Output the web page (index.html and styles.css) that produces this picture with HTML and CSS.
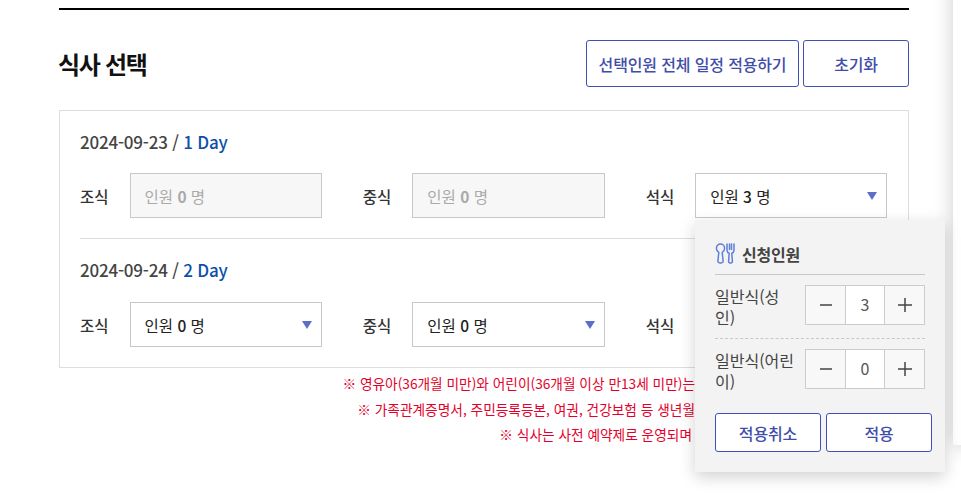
FILE: index.html
```html
<!DOCTYPE html>
<html lang="ko">
<head>
<meta charset="utf-8">
<title>식사 선택</title>
<link rel="stylesheet" href="styles.css">
</head>
<body>
<div class="page">
  <main class="main">
    <header class="head">
      <h2 class="title">식사 선택</h2>
      <div class="actions">
        <button class="btn btn-wide">선택인원 전체 일정 적용하기</button>
        <button class="btn btn-reset">초기화</button>
      </div>
    </header>
    <section class="box">
      <div class="day">
        <p class="date">2024-09-23 / <span class="daynum">1 Day</span></p>
        <div class="meals">
          <div class="meal"><span class="meal-name">조식</span><div class="sel sel-off">인원 <b>0</b> 명</div></div>
          <div class="meal"><span class="meal-name">중식</span><div class="sel sel-off">인원 <b>0</b> 명</div></div>
          <div class="meal"><span class="meal-name">석식</span><div class="sel">인원 <b>3</b> 명</div></div>
        </div>
      </div>
      <div class="day day-second">
        <p class="date">2024-09-24 / <span class="daynum">2 Day</span></p>
        <div class="meals">
          <div class="meal"><span class="meal-name">조식</span><div class="sel">인원 <b>0</b> 명</div></div>
          <div class="meal"><span class="meal-name">중식</span><div class="sel">인원 <b>0</b> 명</div></div>
          <div class="meal"><span class="meal-name">석식</span><div class="sel"></div></div>
        </div>
      </div>
    </section>
    <div class="notes">
      <p>※ 영유아(36개월 미만)와 어린이(36개월 이상 만13세 미만)는</p>
      <p>※ 가족관계증명서, 주민등록등본, 여권, 건강보험 등 생년월</p>
      <p class="note-last">※ 식사는 사전 예약제로 운영되며</p>
    </div>
  </main>

  <aside class="sidepanel"></aside>

  <div class="popup">
    <div class="pop-head">
      <svg class="pop-icon" width="21" height="21" viewBox="0 0 21 21" fill="none" stroke="#5f7fd8" stroke-width="1.5" stroke-linejoin="round" stroke-linecap="round">
        <path d="M5.500 1C3.200 1 1.400 2.900 1.400 5.200c0 1.900 1.100 3.300 2.400 4.200L2.900 18c-.1 1 .8 1.900 1.900 1.900h1.400c1.100 0 2-.9 1.900-1.900L7.200 9.400c1.300-.9 2.400-2.300 2.400-4.200C9.600 2.900 7.800 1 5.500 1z"/>
        <path d="M12 1v6.300c0 1.600 1 2.500 2.200 2.900L13.600 18.200c-.1 1 .6 1.800 1.600 1.800h.6c1 0 1.700-.8 1.600-1.800L16.800 10.200C18 9.800 19 8.900 19 7.300V1"/>
        <path d="M14.500 1v5.500M16.500 1v5.500"/>
      </svg>
      <strong class="pop-title">신청인원</strong>
    </div>
    <div class="pop-row">
      <span class="pop-label">일반식(성인)</span>
      <div class="stepper">
        <button class="step" aria-label="감소"><svg width="12" height="14" viewBox="0 0 12 14"><path d="M0 7h12" stroke="#444" stroke-width="1.500"/></svg></button>
        <span class="count">3</span>
        <button class="step" aria-label="증가"><svg width="14" height="14" viewBox="0 0 14 14"><path d="M0 7h14M7 0v14" stroke="#444" stroke-width="1.500"/></svg></button>
      </div>
    </div>
    <div class="pop-row pop-row-dashed">
      <span class="pop-label">일반식(어린이)</span>
      <div class="stepper">
        <button class="step" aria-label="감소"><svg width="12" height="14" viewBox="0 0 12 14"><path d="M0 7h12" stroke="#444" stroke-width="1.500"/></svg></button>
        <span class="count">0</span>
        <button class="step" aria-label="증가"><svg width="14" height="14" viewBox="0 0 14 14"><path d="M0 7h14M7 0v14" stroke="#444" stroke-width="1.500"/></svg></button>
      </div>
    </div>
    <div class="pop-actions">
      <button class="btn btn-pop">적용취소</button>
      <button class="btn btn-pop">적용</button>
    </div>
  </div>
</div>
</body>
</html>
```
FILE: styles.css
```css
* { box-sizing: border-box; }
html, body { margin: 0; height: 504px; overflow: hidden; background: #fff; }
body { font-family: "Noto Sans CJK KR", "Noto Sans", sans-serif; color: #333; }
p, h2 { margin: 0; }
button { font-family: inherit; cursor: pointer; }

.page { position: relative; width: 961px; height: 504px; overflow: hidden; }

.main { width: 850px; margin-left: 59px; padding-top: 8px; }
.head {
  border-top: 2px solid #000;
  padding-top: 30px;
  display: flex;
  justify-content: space-between;
  align-items: center;
}
.title { font-size: 24px; line-height: 47px; font-weight: 700; color: #111; letter-spacing: -1.3px; margin-left: -1px; }
.actions { display: flex; gap: 4px; }
.btn {
  height: 47px;
  background: #fff;
  border: 1px solid #3f51b5;
  border-radius: 3px;
  color: #3f4ea8;
  font-size: 16px;
  font-weight: 500;
  letter-spacing: -0.15px;
  padding: 0;
}
.btn-wide { width: 213px; }
.btn-reset { width: 106px; }

.box { margin-top: 23px; height: 258px; border: 1px solid #ddd; padding: 0 20px; }
.day { padding: 18px 0 20px; }
.day-second { border-top: 1px solid #ddd; padding-top: 18px; }
.date { font-size: 17px; line-height: 26px; font-weight: 500; color: #444; letter-spacing: -0.2px; }
.daynum { color: #0b50ad; }
.meals { margin-top: 18px; display: grid; grid-template-columns: repeat(3, 1fr); column-gap: 41px; width: 807.500px; }
.day-second .meals { margin-top: 19px; }
.meal { display: flex; align-items: center; }
.meal-name { flex: 0 0 49.500px; font-size: 15.500px; font-weight: 500; color: #333; }
.sel {
  position: relative;
  flex: 1;
  height: 45px;
  line-height: 45px;
  border: 1px solid #c8c8c8;
  padding-left: 14px;
  font-size: 15.500px;
  color: #222;
  background: #fff;
}
.sel b { font-weight: 500; }
.sel::after {
  content: "";
  position: absolute;
  right: 9px;
  top: 18px;
  border-style: solid;
  border-width: 8px 5px 0;
  border-color: #5b6fc9 transparent transparent;
}
.sel-off { background: #f7f7f7; color: #aaa; }
.sel-off b { font-weight: 700; }
.sel-off::after { display: none; }

.notes {
  margin-top: 3px;
  padding-right: 214px;
  display: flex;
  flex-direction: column;
  align-items: flex-end;
  font-size: 13.700px;
  line-height: 25.600px;
  color: #e4002b;
  white-space: nowrap;
}
.note-last { padding-right: 3px; }

.sidepanel {
  position: absolute;
  left: 953px;
  top: -30px;
  width: 40px;
  height: 475px;
  background: #fff;
  box-shadow: 0 0 20px rgba(0, 0, 0, .2);
}

.popup {
  position: absolute;
  left: 695px;
  top: 220px;
  width: 250px;
  height: 252px;
  background: #f3f3f3;
  padding: 23px 20px 0;
  box-shadow: 0 5px 15px rgba(0, 0, 0, .18);
}
.pop-head {
  display: flex;
  align-items: center;
  gap: 6px;
  height: 32px;
  padding-bottom: 10px;
  border-bottom: 1px solid #c8c8c8;
}
.pop-icon { flex: none; }
.pop-title { font-size: 16px; font-weight: 700; color: #444; letter-spacing: -0.2px; }
.pop-row {
  display: flex;
  justify-content: space-between;
  align-items: flex-start;
  padding: 10px 0 13px;
}
.pop-row-dashed { border-top: 1px dashed #c8c8c8; }
.pop-label { width: 84px; height: 40px; font-size: 16px; line-height: 21px; color: #444; padding-top: 1px; }
.stepper { display: flex; width: 120px; height: 40px; border: 1px solid #ccc; background: #fff; }
.step {
  flex: 0 0 39px;
  border: 0;
  padding: 0;
  background: #f8f8f8;
  display: flex;
  align-items: center;
  justify-content: center;
}
.count {
  flex: 1;
  text-align: center;
  line-height: 37px;
  font-size: 16px;
  color: #555;
  border-left: 1px solid #ccc;
  border-right: 1px solid #ccc;
  background: #fff;
}
.pop-actions { display: flex; gap: 5px; width: 217px; margin-top: 11px; }
.btn-pop { flex: 1; height: 39px; }
```
